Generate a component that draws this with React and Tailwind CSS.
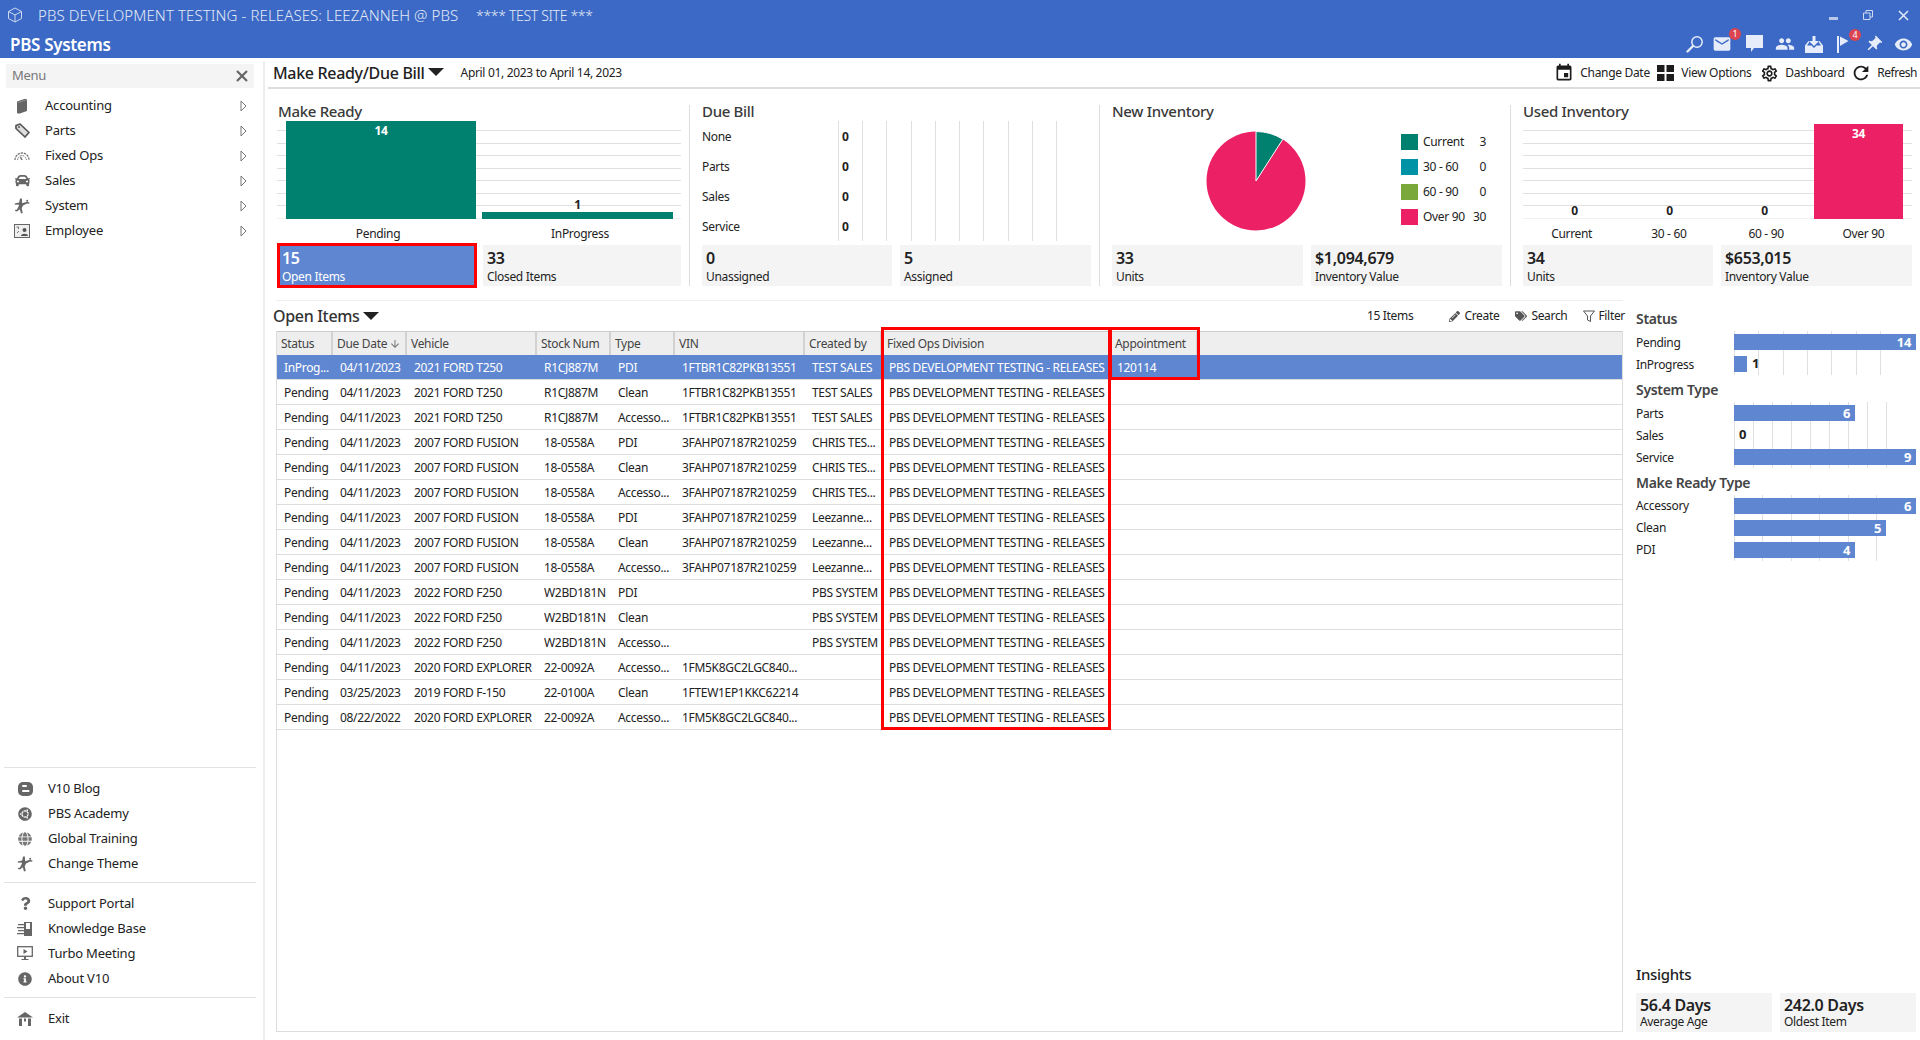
import React from 'react';
import { FaUbuntu, FaGlobe, FaQuestion, FaInfoCircle, FaCar, FaPencilAlt, FaTags } from 'react-icons/fa';
import { MdEmail, MdPeople, MdPushPin, MdRemoveRedEye, MdEvent, MdRefresh, MdOutlineSettings, MdArrowDownward } from 'react-icons/md';

const rowsData = [
  ['InProg...','04/11/2023','2021 FORD T250','R1CJ887M','PDI','1FTBR1C82PKB13551','TEST SALES','120114'],
  ['Pending','04/11/2023','2021 FORD T250','R1CJ887M','Clean','1FTBR1C82PKB13551','TEST SALES',''],
  ['Pending','04/11/2023','2021 FORD T250','R1CJ887M','Accesso...','1FTBR1C82PKB13551','TEST SALES',''],
  ['Pending','04/11/2023','2007 FORD FUSION','18-0558A','PDI','3FAHP07187R210259','CHRIS TES...',''],
  ['Pending','04/11/2023','2007 FORD FUSION','18-0558A','Clean','3FAHP07187R210259','CHRIS TES...',''],
  ['Pending','04/11/2023','2007 FORD FUSION','18-0558A','Accesso...','3FAHP07187R210259','CHRIS TES...',''],
  ['Pending','04/11/2023','2007 FORD FUSION','18-0558A','PDI','3FAHP07187R210259','Leezanne...',''],
  ['Pending','04/11/2023','2007 FORD FUSION','18-0558A','Clean','3FAHP07187R210259','Leezanne...',''],
  ['Pending','04/11/2023','2007 FORD FUSION','18-0558A','Accesso...','3FAHP07187R210259','Leezanne...',''],
  ['Pending','04/11/2023','2022 FORD F250','W2BD181N','PDI','','PBS SYSTEM',''],
  ['Pending','04/11/2023','2022 FORD F250','W2BD181N','Clean','','PBS SYSTEM',''],
  ['Pending','04/11/2023','2022 FORD F250','W2BD181N','Accesso...','','PBS SYSTEM',''],
  ['Pending','04/11/2023','2020 FORD EXPLORER','22-0092A','Accesso...','1FM5K8GC2LGC840...','',''],
  ['Pending','03/25/2023','2019 FORD F-150','22-0100A','Clean','1FTEW1EP1KKC62214','',''],
  ['Pending','08/22/2022','2020 FORD EXPLORER','22-0092A','Accesso...','1FM5K8GC2LGC840...','',''],
];
const heads = ['Status','Due Date','Vehicle','Stock Num','Type','VIN','Created by','Fixed Ops Division','Appointment',''];
const cols = 'grid grid-cols-[56px_74px_130px_74px_64px_130px_77px_228px_88px_1fr]';

const Book = () => <svg width="16" height="16" viewBox="0 0 16 16"><path d="M3 3.5 11 .8 13 1.500V13l-8 2.800-2-.8z" fill="#666"/><path d="M3 3.500l2 .8 8-2.800" fill="none" stroke="#999" strokeWidth=".8"/></svg>;
const TagI = () => <svg width="15" height="15" viewBox="0 0 15 15"><path d="M1 2.500 5 1l9 8.500L10 14 1 5.500z" fill="#ddd" stroke="#555" strokeWidth="1.700" strokeLinejoin="round"/><circle cx="4" cy="4" r="1" fill="#555"/></svg>;
const Gauge = () => <svg width="16" height="12" viewBox="0 0 16 12" fill="none" stroke="#777"><path d="M1 10A7 7 0 0 1 15 10" strokeWidth="1.300" strokeDasharray="2.400 .8"/><path d="M3.600 10A4.400 4.400 0 0 1 12.400 10" strokeWidth="1" strokeDasharray="1.600 .8"/><path d="M8 10 6.500 7" strokeWidth="1.600"/></svg>;
const Gym = () => <svg width="16" height="16" viewBox="0 0 16 16" fill="#666"><path d="M6 .5h1.800l.4 4.800 4.800-1.600 2.500.8-.3 1.300-2.200-.2-4 2-1.300 2.700 1 4.700-1.700.4-1.200-4.200L3 13.500 1 13l.4-1.300 1.500.1L5 7.500 4.500 6.400 1 6.800.7 5.500l4.500-1z"/><circle cx="13.200" cy="2.800" r="1"/></svg>;
const Employee = () => <svg width="16" height="14" viewBox="0 0 16 14"><rect x=".5" y=".5" width="15" height="13" fill="#eee" stroke="#666"/><circle cx="10.500" cy="6" r="2" fill="#555"/><path d="M7 12c0-3 7-3 7 0z" fill="#555"/><path d="M2.500 3h2v2M5 7l-2 2" stroke="#777" fill="none"/></svg>;
const Blog = () => <svg width="15" height="14" viewBox="0 0 15 14"><rect width="15" height="14" rx="5" fill="#666"/><rect x="4" y="3" width="5" height="2" rx="1" fill="#fff"/><rect x="4" y="8" width="7.500" height="2" rx="1" fill="#fff"/></svg>;
const KB = () => <svg width="16" height="14" viewBox="0 0 16 14" fill="#666"><rect x="7" y="0" width="8" height="14"/><path d="M1 2h6v1.200H1zM0 5h7v1.200H0zM1 8h6v1.200H1zM0 11h7v1.200H0z"/><rect x="9" y="1" width="4" height="6" fill="#fff"/></svg>;
const Monitor = () => <svg width="16" height="15" viewBox="0 0 16 15"><rect x=".7" y=".7" width="14.600" height="9.600" fill="none" stroke="#666" strokeWidth="1.300"/><path d="M6.500 3v5l4-2.500z" fill="#666"/><path d="M7 10.500h2V13h2.500v1h-7v-1H7z" fill="#666"/></svg>;
const HomeI = () => <svg width="16" height="14" viewBox="0 0 16 14" fill="#666"><path d="M8 0 16 5.500H0z"/><path d="M2 6.500h3V14H2zM11 6.500h3V14h-3zM7 6.500h2v3H7z"/></svg>;
const Chevron = () => <svg width="7" height="12" viewBox="0 0 7 12" className="shrink-0"><path d="M1 1 6 6 1 11z" fill="#fff" stroke="#777" strokeWidth="1"/></svg>;
const Caret = () => <svg width="16" height="8" viewBox="0 0 16 8" className="shrink-0"><path d="M0 0h16L8 8z" fill="#222"/></svg>;
const SearchI = () => <svg width="18" height="18" viewBox="0 0 18 18" fill="none" stroke="#e6ecfa"><circle cx="11" cy="7" r="5.200" strokeWidth="1.500"/><path d="M7 11 1.500 16.500" strokeWidth="2.400" strokeLinecap="round"/></svg>;
const Chat = () => <svg width="17" height="18" viewBox="0 0 17 18" fill="#e6ecfa"><path d="M0 0h17v13H8l-3 4v-4H0z"/></svg>;
const Inbox = () => <svg width="18" height="17" viewBox="0 0 18 17" fill="#e6ecfa"><path d="M7.500 0h3v5H14L9 10 4 5h3.500z"/><path d="M3.500 5 0 9.500V17h18V9.500L14.500 5 13.600 6 16 9.500l-4.500 0L9 12 6.500 9.500 2 9.500 4.400 6z"/></svg>;
const FlagI = () => <svg width="12" height="18" viewBox="0 0 12 18" fill="#e6ecfa"><rect width="2" height="17" x="0" y="1" /><path d="M3 1.500 11.500 6 3 11z"/></svg>;
const Grid4 = () => <svg width="17" height="16" viewBox="0 0 17 16" fill="#1c1c1c"><rect width="7.500" height="7"/><rect x="9.500" width="7.500" height="7"/><rect y="9" width="7.500" height="7"/><rect x="9.500" y="9" width="7.500" height="7"/></svg>;

const topItems = [
  ['Accounting', <Book/>], ['Parts', <TagI/>], ['Fixed Ops', <Gauge/>],
  ['Sales', <FaCar size={15} color="#666"/>], ['System', <Gym/>], ['Employee', <Employee/>],
];
const g1 = [['V10 Blog', <Blog/>], ['PBS Academy', <FaUbuntu size={14} color="#666"/>], ['Global Training', <FaGlobe size={14} color="#777"/>], ['Change Theme', <Gym/>]];
const g2 = [['Support Portal', <FaQuestion size={13} color="#666"/>], ['Knowledge Base', <KB/>], ['Turbo Meeting', <Monitor/>], ['About V10', <FaInfoCircle size={14} color="#666"/>]];
const g3 = [['Exit', <HomeI/>]];

function NavRow({ label, icon, chev }) {
  return (
    <div className="flex items-center h-[25px] text-[13px] tracking-[-0.015em] text-[#222]">
      <div className="w-[45px] flex justify-center shrink-0 pr-[1px]">{icon}</div>
      <span className="w-[195px]">{label}</span>
      {chev && <Chevron/>}
    </div>
  );
}
function NavGroup({ items }) {
  return <div className="pl-[3px]">{items.map(([l, i]) => <NavRow key={l} label={l} icon={i}/>)}</div>;
}
const Sep = ({ cls }) => <div className={`mx-[4px] w-[252px] border-t border-[#e2e2e2] ${cls}`}/>;

function Sidebar() {
  return (
    <aside className="w-[265px] shrink-0 mt-[3px] border-r-[2px] border-[#eeeeee] flex flex-col">
      <div className="ml-[6px] mt-[3px] w-[248px] h-[24px] bg-[#f4f4f4] flex items-center justify-between pl-[6px] pr-[6px] text-[13px] text-[#777] pb-[1px]">
        <span>Menu</span>
        <svg width="12" height="12" viewBox="0 0 12 12" stroke="#666" strokeWidth="2.200"><path d="M1 1l10 10M11 1 1 11"/></svg>
      </div>
      <div className="mt-[5px]">{topItems.map(([l, i]) => <NavRow key={l} label={l} icon={i} chev/>)}</div>
      <div className="mt-auto pb-[9px]">
        <Sep cls="mb-[8px]"/>
        <NavGroup items={g1}/>
        <Sep cls="mt-[6px] mb-[8px]"/>
        <NavGroup items={g2}/>
        <Sep cls="mt-[6px] mb-[8px]"/>
        <NavGroup items={g3}/>
      </div>
    </aside>
  );
}

function Header() {
  return (
    <header className="h-[58px] bg-[#3b69c5] shrink-0 text-white">
      <div className="h-[30px] flex items-center">
        <svg width="16" height="16" viewBox="0 0 16 16" fill="none" stroke="#cfd9f0" strokeWidth="1" className="ml-[7px]"><path d="M8 1 14.500 4.500v7L8 15 1.500 11.500v-7zM1.500 4.500 8 8l6.500-3.500M8 8v7"/></svg>
        <span className="ml-[15px] text-[15px] tracking-[0.1px] font-light text-[#e4eaf7] w-[438px] whitespace-nowrap">PBS DEVELOPMENT TESTING - RELEASES: LEEZANNEH @ PBS</span>
        <span className="text-[14px] font-light text-[#e4eaf7]">**** TEST SITE ***</span>
        <div className="ml-auto flex items-center gap-[25px] pr-[11px]">
          <div className="w-[9px] h-[3px] bg-[#b9c8ea] mt-[6px]"/>
          <svg width="10" height="10" viewBox="0 0 10 10" fill="none" stroke="#cfd9f0"><path d="M.5 3h6.500v6.500H.5zM3 3V.5h6.500V7H7"/></svg>
          <svg width="11" height="11" viewBox="0 0 11 11" stroke="#e4eaf7" strokeWidth="1.500"><path d="M1 1l9 9M10 1 1 10"/></svg>
        </div>
      </div>
      <div className="h-[28px] flex items-center">
        <span className="ml-[10px] text-[17px] font-semibold pt-[2px]">PBS Systems</span>
        <div className="ml-auto flex items-center pr-[7px] text-[#e6ecfa]">
          <SearchI/>
          <div className="relative ml-[8px]"><MdEmail size={20}/><span className="absolute -top-[6px] -right-[9px] w-[12px] h-[12px] rounded-full bg-[#db4450] text-white text-[9px] leading-[12px] text-center">1</span></div>
          <div className="ml-[14px]"><Chat/></div>
          <MdPeople size={20} className="ml-[12px]"/>
          <div className="ml-[10px]"><Inbox/></div>
          <div className="relative ml-[14px]"><FlagI/><span className="absolute -top-[6px] -right-[12px] w-[12px] h-[12px] rounded-full bg-[#db4450] text-white text-[9px] leading-[12px] text-center">4</span></div>
          <MdPushPin size={19} className="ml-[15px] rotate-45"/>
          <MdRemoveRedEye size={19} className="ml-[11px]"/>
        </div>
      </div>
    </header>
  );
}

function Toolbar() {
  return (
    <div className="ml-[3px] h-[31px] shrink-0 border-b-[2px] border-[#dddddd] flex items-center pl-[5px] text-[12px] text-[#222]">
      <span className="text-[16px] font-medium pt-[1px]">Make Ready/Due Bill</span>
      <span className="ml-[3px] mb-[2px]"><Caret/></span>
      <span className="ml-[17px] pt-[1px]">April 01, 2023 to April 14, 2023</span>
      <div className="ml-auto flex items-center pr-[3px] pt-[1px]">
        <MdEvent size={20} color="#1c1c1c"/>
        <span className="ml-[6px] w-[77px]">Change Date</span>
        <Grid4/>
        <span className="ml-[7px] w-[79px]">View Options</span>
        <MdOutlineSettings size={19} color="#1c1c1c"/>
        <span className="ml-[6px] w-[65px]">Dashboard</span>
        <MdRefresh size={22} color="#1c1c1c"/>
        <span className="ml-[5px] tracking-[-0.04em]">Refresh</span>
      </div>
    </div>
  );
}

const Divider = () => <div className="w-px ml-[8px] mr-[12px] mt-[4px] bg-[#dddddd] shrink-0"/>;
const Title = ({ children }) => <div className="h-[20px] flex items-center text-[15px] font-medium text-[#3a3a3a] leading-none">{children}</div>;

function Stat({ value, label, active, w }) {
  if (active) {
    return (
      <div className={`${w} h-[45px] -my-[2px] border-[3px] border-[#ff0000] bg-[#5f87d1] text-white pl-[2px] pt-[2px]`}>
        <div className="text-[16px] font-semibold leading-[21px]">{value}</div>
        <div className="text-[12px] leading-[15px]">{label}</div>
      </div>
    );
  }
  return (
    <div className={`${w} h-[41px] bg-[#f4f4f4] text-[#222] pl-[4px] pt-[3px]`}>
      <div className="text-[16px] font-semibold leading-[21px]">{value}</div>
      <div className="text-[12px] leading-[15px]">{label}</div>
    </div>
  );
}

const HGrid = () => (
  <div className="absolute inset-x-0 top-[9px] bottom-0 flex flex-col justify-between">
    {[0,1,2,3,4,5,6].map(i => <div key={i} className="h-px bg-[#e0e0e0]"/>)}
    <div className="h-px bg-[#f0f0f0]"/>
  </div>
);

function MakeReady() {
  return (
    <div className="w-[404px] shrink-0 flex flex-col">
      <div className="pl-[1px]"><Title>Make Ready</Title></div>
      <div className="relative h-[98px]">
        <HGrid/>
        <div className="relative h-full flex items-end pl-[9px] gap-[6px]">
          <div className="w-[190px] h-[98px] bg-[#00806f] text-white text-[12px] font-bold text-center pt-[1px]">14</div>
          <div className="w-[191px] flex flex-col items-center">
            <span className="text-[12px] font-bold text-[#222] leading-[15px]">1</span>
            <div className="w-full h-[7px] bg-[#00806f]"/>
          </div>
        </div>
      </div>
      <div className="h-[26px] pt-[6px] flex text-[12px] text-[#222] text-center">
        <span className="w-[202px]">Pending</span>
        <span className="w-[202px]">InProgress</span>
      </div>
      <div className="flex gap-[6px]">
        <Stat value="15" label="Open Items" active w="w-[200px]"/>
        <Stat value="33" label="Closed Items" w="w-[198px]"/>
      </div>
    </div>
  );
}

function DueBill() {
  return (
    <div className="w-[389px] shrink-0 flex flex-col">
      <Title>Due Bill</Title>
      <div className="relative h-[124px]">
        <div className="absolute left-[136px] top-0 w-[219px] h-[120px] flex justify-between">
          {[0,1,2,3,4,5,6,7,8,9].map(i => <div key={i} className="w-px bg-[#e0e0e0]"/>)}
        </div>
        <div className="relative pt-[1px]">
          {['None','Parts','Sales','Service'].map(l => (
            <div key={l} className="h-[30px] flex items-center text-[12px] text-[#222]">
              <span className="w-[140px]">{l}</span>
              <span className="font-bold text-[12px]">0</span>
            </div>
          ))}
        </div>
      </div>
      <div className="flex gap-[8px]">
        <Stat value="0" label="Unassigned" w="w-[190px]"/>
        <Stat value="5" label="Assigned" w="w-[191px]"/>
      </div>
    </div>
  );
}

function NewInv() {
  const legend = [['Current','3','bg-[#00806f]'],['30 - 60','0','bg-[#0093a6]'],['60 - 90','0','bg-[#7ba83b]'],['Over 90','30','bg-[#ec2064]']];
  return (
    <div className="w-[390px] shrink-0 flex flex-col">
      <Title>New Inventory</Title>
      <div className="h-[124px] flex">
        <svg width="100" height="100" viewBox="0 0 100 100" className="ml-[94px] mt-[10px] shrink-0">
          <circle cx="50" cy="50" r="49.500" fill="#ec2064"/>
          <path d="M50 50V.5A49.500 49.500 0 0 1 76.800 8.300z" fill="#00806f" stroke="#fff" strokeWidth="1"/>
        </svg>
        <div className="ml-[95px] mt-[8px] w-[85px]">
          {legend.map(([l, v, c]) => (
            <div key={l} className="h-[25px] flex items-center text-[12px] text-[#222]">
              <span className={`w-[17px] h-[16px] mr-[5px] ${c}`}/>
              <span>{l}</span>
              <span className="ml-auto">{v}</span>
            </div>
          ))}
        </div>
      </div>
      <div className="flex gap-[8px]">
        <Stat value="33" label="Units" w="w-[191px]"/>
        <Stat value="$1,094,679" label="Inventory Value" w="w-[191px]"/>
      </div>
    </div>
  );
}

function UsedInv() {
  return (
    <div className="w-[389px] shrink-0 flex flex-col">
      <Title>Used Inventory</Title>
      <div className="relative h-[98px]">
        <HGrid/>
        <div className="relative h-full flex items-end pl-[4px]">
          {[0,1,2].map(i => <div key={i} className="w-[95px] text-center text-[12px] font-bold text-[#222] leading-[16px]">0</div>)}
          <div className="ml-[2px] w-[89px] h-[95px] bg-[#ec2064] text-white text-[12px] font-bold text-center pt-[1px]">34</div>
        </div>
      </div>
      <div className="h-[26px] pt-[6px] grid grid-cols-4 text-[12px] text-[#222] text-center">
        <span>Current</span><span>30 - 60</span><span>60 - 90</span><span>Over 90</span>
      </div>
      <div className="flex gap-[8px]">
        <Stat value="34" label="Units" w="w-[190px]"/>
        <Stat value="$653,015" label="Inventory Value" w="w-[191px]"/>
      </div>
    </div>
  );
}

function Table() {
  return (
    <div className="relative flex-1 ml-[8px] border border-[#dddddd] min-h-0">
      <div className={`${cols} h-[24px] bg-[#eeeeee] border-t border-[#cccccc] -mt-px text-[12px] text-[#444]`}>
        {heads.map((h, i) => (
          <div key={i} className={`flex items-center whitespace-nowrap ${i >= 7 ? 'pl-[5px]' : 'pl-[4px]'} ${i < 9 ? 'border-r-[2px] border-[#d2d2d2]' : ''}`}>
            {h}{i === 1 && <MdArrowDownward size={12} color="#777" className="ml-[2px]"/>}
          </div>
        ))}
      </div>
      {rowsData.map((r, i) => (
        <div key={i} className={`${cols} h-[25px] border-b border-[#dddddd] text-[12px] ${i === 0 ? 'bg-[#5f87d1] text-white' : 'text-[#222]'}`}>
          {[r[0], r[1], r[2], r[3], r[4], r[5], r[6], 'PBS DEVELOPMENT TESTING - RELEASES', r[7]].map((c, j) => (
            <div key={j} className="flex items-center pl-[7px] pt-[1px] whitespace-nowrap overflow-hidden">{c}</div>
          ))}
        </div>
      ))}
      <div className="absolute left-[604px] -top-[5px] w-[230px] h-[403px] border-[3px] border-[#ff0000]"/>
      <div className="absolute left-[832px] -top-[5px] w-[91px] h-[53px] border-[3px] border-[#ff0000]"/>
    </div>
  );
}

function HBars({ rows, gridW, lines, labelCls }) {
  return (
    <div className="relative py-[3px] flex flex-col gap-[6px]">
      <div className={`absolute left-[98px] inset-y-0 flex justify-between ${gridW}`}>
        {lines.map(i => <div key={i} className="w-px bg-[#e0e0e0]"/>)}
      </div>
      {rows.map(([l, v, w, inside]) => (
        <div key={l} className="relative flex items-center h-[16px] text-[12px] text-[#222]">
          <span className={`w-[98px] shrink-0 ${labelCls}`}>{l}</span>
          {w && <div className={`${w} h-[16px] bg-[#5f87d1] text-right text-white font-bold text-[13px] leading-[16px] pr-[5px]`}>{inside ? v : ''}</div>}
          {!inside && <span className="ml-[5px] font-bold text-[13px]">{v}</span>}
        </div>
      ))}
    </div>
  );
}
const GH = ({ children, cls }) => <div className={`h-[20px] flex items-center text-[14px] font-semibold text-[#444] ${cls}`}>{children}</div>;

function RightPanel() {
  return (
    <div className="w-[280px] ml-[13px] shrink-0 flex flex-col pt-[8px]">
      <GH cls="pt-[1px]">Status</GH>
      <div className="mt-[3px]">
        <HBars labelCls="pt-[1px]" gridW="w-[147px]" lines={[0,1,2,3,4,5,6]} rows={[['Pending','14','w-[182px]',true],['InProgress','1','w-[13px]',false]]}/>
      </div>
      <div className="mt-[4px]"><GH>System Type</GH></div>
      <div className="mt-[3px]">
        <HBars labelCls="pt-[1px]" gridW="w-[153px]" lines={[0,1,2,3,4,5,6,7,8]} rows={[['Parts','6','w-[121px]',true],['Sales','0','',false],['Service','9','w-[182px]',true]]}/>
      </div>
      <div className="mt-[4px]"><GH>Make Ready Type</GH></div>
      <div className="mt-[3px]">
        <HBars labelCls="" gridW="w-[143px]" lines={[0,1,2,3,4,5]} rows={[['Accessory','6','w-[182px]',true],['Clean','5','w-[152px]',true],['PDI','4','w-[121px]',true]]}/>
      </div>
      <div className="mt-auto">
        <div className="h-[20px] flex items-center text-[15px] font-medium text-[#222] -translate-y-px">Insights</div>
        <div className="mt-[8px] flex gap-[8px] text-[#222]">
          {[['56.4 Days','Average Age'],['242.0 Days','Oldest Item']].map(([a, b]) => (
            <div key={a} className="w-[136px] h-[39px] bg-[#f4f4f4] pl-[4px] pt-[3px]">
              <div className="text-[16px] font-semibold leading-[18px]">{a}</div>
              <div className="text-[12px] leading-[15px]">{b}</div>
            </div>
          ))}
        </div>
      </div>
    </div>
  );
}

export default function App() {
  return (
    <div className="w-[1920px] h-[1040px] overflow-hidden bg-white flex flex-col font-['Noto_Sans',sans-serif] tracking-[-0.02em]">
      <Header/>
      <div className="flex flex-1 min-h-0">
        <Sidebar/>
        <main className="flex-1 min-w-0 flex flex-col">
          <Toolbar/>
          <div className="h-[211px] shrink-0 pt-[12px] pb-[14px] pl-[12px] flex">
            <MakeReady/><Divider/><DueBill/><Divider/><NewInv/><Divider/><UsedInv/>
          </div>
          <div className="flex-1 min-h-0 flex pb-[8px] ml-[3px]">
            <div className="w-[1355px] shrink-0 flex flex-col">
              <div className="ml-[8px] h-px bg-[#eeeeee]"/>
              <div className="h-[30px] flex items-center pl-[5px] text-[12px] text-[#222] shrink-0">
                <span className="text-[16px] font-medium text-[#333] pb-[1px]">Open Items</span>
                <span className="ml-[3px]"><Caret/></span>
                <span className="ml-auto">15 Items</span>
                <FaPencilAlt size={11} color="#555" className="ml-[36px]"/>
                <span className="ml-[4px]">Create</span>
                <FaTags size={12} color="#555" className="ml-[16px]"/>
                <span className="ml-[4px]">Search</span>
                <svg width="12" height="13" viewBox="0 0 12 13" fill="none" stroke="#555" className="ml-[16px]"><path d="M.5 1h11L7.500 6v5.500L4.500 10V6z"/></svg>
                <span className="ml-[3px] -mr-[2px]">Filter</span>
              </div>
              <Table/>
            </div>
            <RightPanel/>
          </div>
        </main>
      </div>
    </div>
  );
}
